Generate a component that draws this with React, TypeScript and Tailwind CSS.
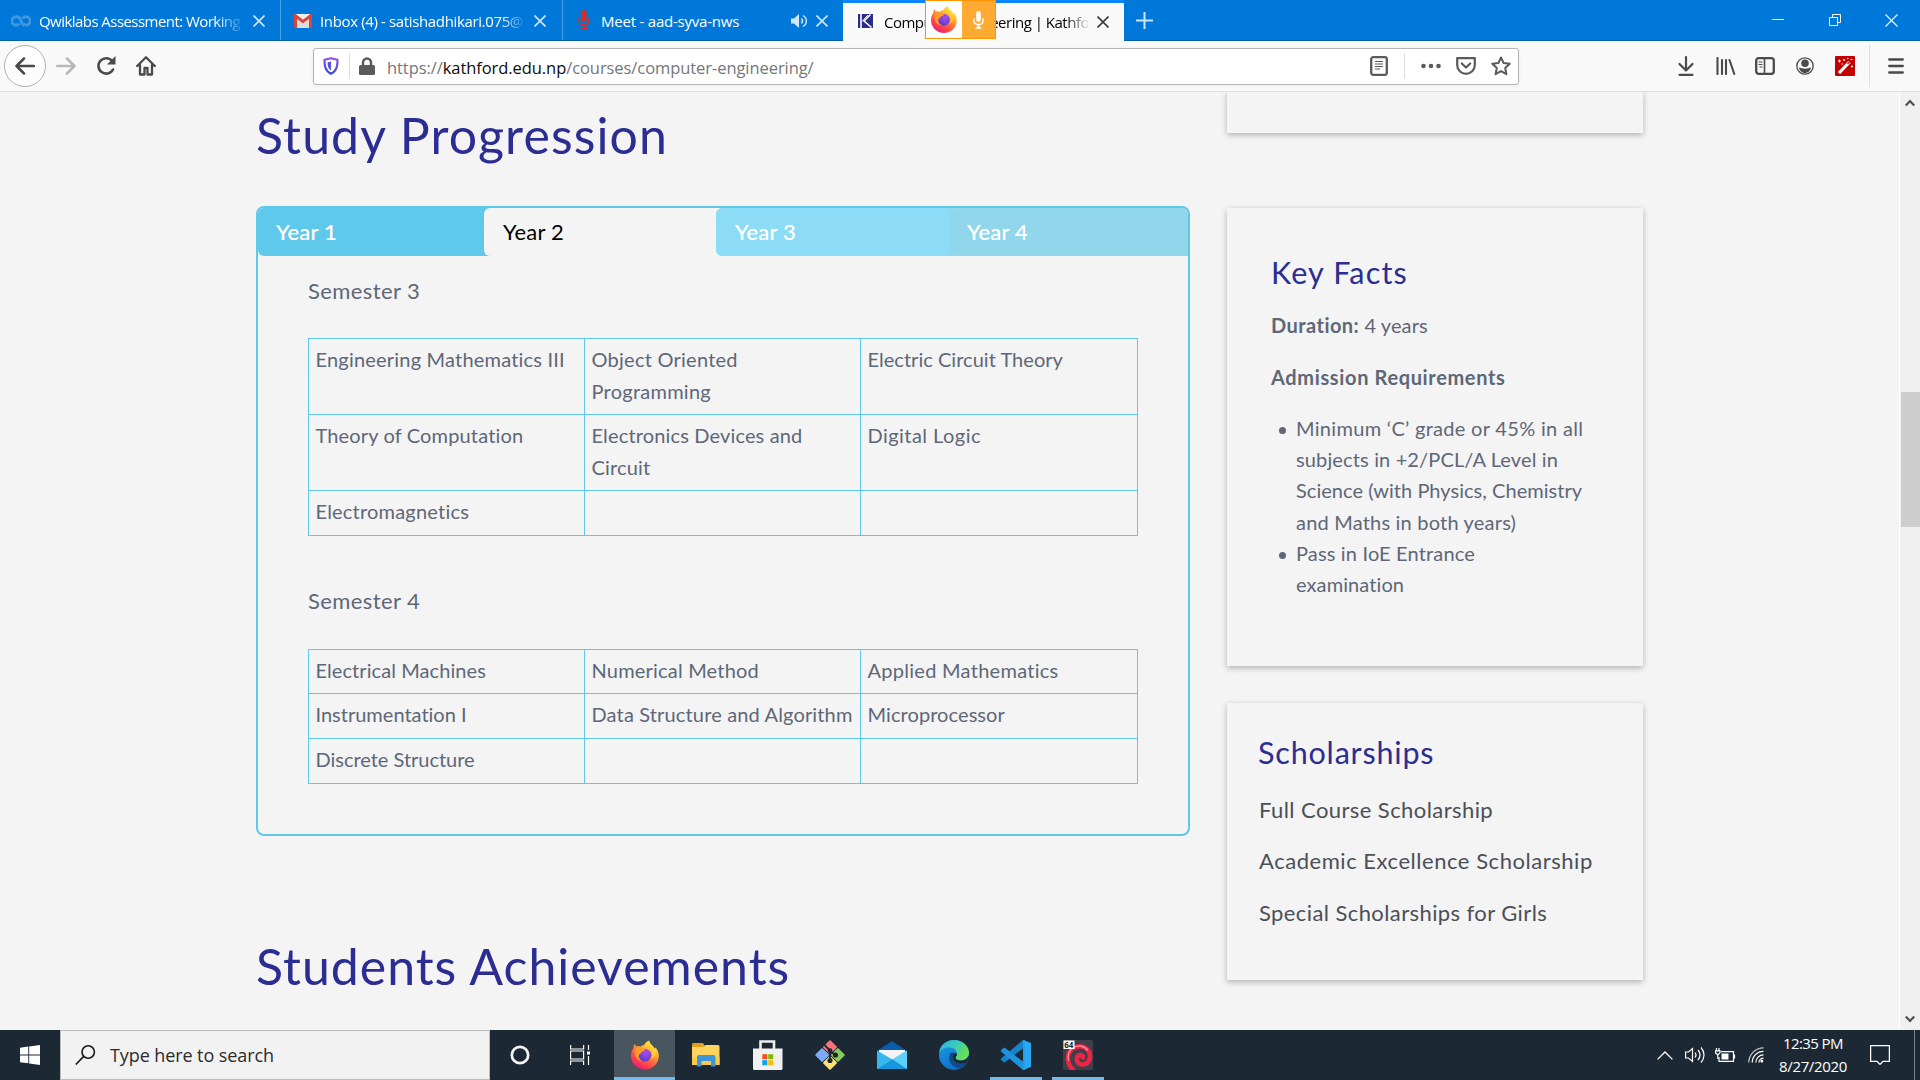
import type { ReactNode } from 'react';

const ui = "font-['Open_Sans','Noto_Sans',sans-serif]";

function Firefox({ className, id }: { className: string; id: string }) {
  return (
    <svg viewBox="0 0 28 29" className={className}>
      <defs>
        <linearGradient id={id + 'a'} x1="0.85" y1="0" x2="0.25" y2="1">
          <stop offset="0" stopColor="#fff44f" />
          <stop offset="0.3" stopColor="#ffc02f" />
          <stop offset="0.55" stopColor="#ff7139" />
          <stop offset="0.8" stopColor="#ff3a52" />
          <stop offset="1" stopColor="#e31587" />
        </linearGradient>
        <radialGradient id={id + 'b'} cx="0.6" cy="0.3" r="0.8">
          <stop offset="0" stopColor="#a94df0" />
          <stop offset="0.6" stopColor="#7342d8" />
          <stop offset="1" stopColor="#4a3fc0" />
        </radialGradient>
      </defs>
      <path
        d="M18.2 0c.4 2 1.4 3.400 3 4.700 1.300 1.200 2 2.300 2.400 3.600.6-.3.9-1 .9-1.500 2.200 2.800 3.500 6 3.300 9.300C27.500 23.300 21.400 29 14 29 6.300 29 0 23 0 15.400 0 12.300.9 9.500 2.500 7.400 2.500 5.800 2.900 4.500 3.800 3.300c.3 1.200.7 2 1.500 2.600C7 5.300 8.300 5.500 9.300 6.200 10.300 5.200 11.500 4.600 13 4.400c1.300-1.900 2.900-3.600 5.200-4.400z"
        fill={`url(#${id}a)`}
      />
      <circle cx="14" cy="14.800" r="6.300" fill={`url(#${id}b)`} />
      <path d="M4 8c2.200-1 4.300-.8 6 .4 1.500-.2 3 .1 4 .7-.4 1.500-1.700 1.900-3.300 2.300-.4 1.100-1 1.700-2.200 2.100C7 16 8 19 11 20.600c-4.600-.2-8-4-7-12.600z" fill="#ff9a2e" />
      <path d="M17.500 3c-.5 3 3.500 5 4 9 .4 3-1 5.500-3 7 4-1 6.500-4 6.200-8C24.500 7 20 6.500 17.500 3z" fill="#ffd43a" opacity=".75" />
    </svg>
  );
}

const TabClose = ({ dark }: { dark?: boolean }) => (
  <svg viewBox="0 0 12 12" className={dark ? 'size-3 shrink-0 text-[#3c3c3c]' : 'size-3 shrink-0 text-[#cfe6fa]'} stroke="currentColor" strokeWidth="1.600">
    <path d="M.5.5l11 11M11.500.5l-11 11" />
  </svg>
);

const Mic = ({ className }: { className: string }) => (
  <svg viewBox="0 0 12 20" className={className} fill="currentColor">
    <rect x="3.500" y="0" width="5" height="12" rx="2.500" />
    <path d="M1 8v2.500C1 13 3 15 6 15s5-2 5-4.500V8" fill="none" stroke="currentColor" strokeWidth="1.500" />
    <path d="M5 15h2v3h2.200v1.700H2.800V18H5z" />
  </svg>
);

function TabBar() {
  return (
    <div className={`flex h-[41px] bg-[#0078d9] text-[15px] leading-[40px] text-white border-b border-[#0060ae] ${ui}`}>
      <div className="flex w-[281px] items-center border-r border-[#4ba0e4] pl-[11px] pr-[15px] pt-[2px]">
        <svg viewBox="0 0 20 12" className="mr-2 h-3 w-5 shrink-0" fill="none" stroke="#3f97e0" strokeWidth="3">
          <path d="M14.500 8.500C12.500 11 11 10 10 6 9 2 7 1.500 5 1.800a4.200 4.200 0 0 0 0 8.400c1.500 0 2.500-.6 3.200-1.600M11.600 3.400C12.500 2.300 13.500 1.800 15 1.800a4.200 4.200 0 0 1 0 8.400" />
        </svg>
        <span className="mr-2 w-[207px] whitespace-nowrap tracking-[-0.55px] [mask-image:linear-gradient(90deg,#000_85%,transparent)]">Qwiklabs Assessment: Working</span>
        <TabClose />
      </div>
      <div className="flex w-[282px] items-center border-r border-[#4ba0e4] pl-[13px] pr-[15px] pt-[2px]">
        <svg viewBox="0 0 18 14" className="mr-2 h-[14px] w-[18px] shrink-0">
          <path d="M1 0h16v14H1z" fill="#f1f1f1" />
          <path d="M3 14V5l6 5 6-5v9z" fill="#dcdcdc" />
          <path d="M0 1.200V13a1 1 0 0 0 1 1h2V4.800l6 4.600 6-4.600V14h2a1 1 0 0 0 1-1V1.200C18 .2 16.800-.4 16 .3L9 5.800 2 .3C1.200-.4 0 .2 0 1.200z" fill="#dc4437" />
        </svg>
        <span className="mr-2 w-[206px] whitespace-nowrap tracking-[-0.36px] [mask-image:linear-gradient(90deg,#000_88%,transparent)]">Inbox (4) - satishadhikari.075@</span>
        <TabClose />
      </div>
      <div className="flex w-[280px] items-center pl-[15px] pr-[15px] pt-[2px]">
        <Mic className="mr-[11px] mt-[-2px] h-[20px] w-[12px] shrink-0 text-[#e0291d]" />
        <span className="mr-auto tracking-[-0.22px]">Meet - aad-syva-nws</span>
        <svg viewBox="0 0 18 14" className="mr-[7px] h-[14px] w-[18px]" fill="none" stroke="#cfe6fa" strokeWidth="1.400">
          <path d="M0 4.500h3L8 0v14L3 9.500H0z" fill="#cfe6fa" stroke="none" />
          <path d="M10.500 4.500c1.300 1.500 1.300 3.500 0 5M12 1.500c4.500 2.500 4.500 8.500 0 11" />
        </svg>
        <TabClose />
      </div>
      <div className="relative -mb-px flex w-[281px] items-center border-t-[3px] border-[#0a84ff] bg-[#f9f9f9] pb-[1px] pl-[13px] pr-[15px] text-black">
        <svg viewBox="0 0 19 19" className="mr-[9px] size-[19px] shrink-0">
          <path d="M0 0h19v19H0z" fill="#fff" />
          <path d="M2 2h15v14H2z" fill="#2b2d8e" />
          <path d="M5 2v14M14.500 2.500L8 9l7.500 6.500" stroke="#fff" strokeWidth="1.600" fill="none" />
          <path d="M12 3L6 9.500" stroke="#fff" strokeWidth="1" />
        </svg>
        <span className="mr-auto w-[206px] whitespace-nowrap tracking-[-0.5px] [mask-image:linear-gradient(90deg,#000_88%,transparent)]">Computer Engineering | Kathfo</span>
        <TabClose dark />
        <div className="absolute -top-[3px] left-[82px] flex h-[39px] w-[71px] border border-[#ff9500] bg-white">
          <div className="flex w-[36px] items-center justify-center">
            <Firefox id="share" className="h-[27px] w-[26px]" />
          </div>
          <div className="flex flex-1 items-center justify-center bg-[#ffaa33]">
            <Mic className="h-[18px] w-[11px] text-white" />
          </div>
        </div>
      </div>
      <div className="flex flex-1 items-center pl-[12px] pr-[22px]">
        <svg viewBox="0 0 17 17" className="mr-auto size-[17px]" stroke="#cfe6fa" strokeWidth="2">
          <path d="M8.500 0v17M0 8.500h17" />
        </svg>
        <svg viewBox="0 0 12 12" className="mr-[45px] size-3" stroke="#fff">
          <path d="M0 5.500h12" />
        </svg>
        <svg viewBox="0 0 12 12" className="mr-[44px] size-3" stroke="#fff" fill="none">
          <path d="M.5 3.500h8v8h-8zM3.500 3.500v-3h8v8h-3" />
        </svg>
        <svg viewBox="0 0 13 13" className="size-[13px]" stroke="#fff" strokeWidth="1.100">
          <path d="M.5.5l12 12M12.500.5l-12 12" />
        </svg>
      </div>
    </div>
  );
}

function NavBar() {
  return (
    <div className="flex h-[51px] items-center border-b border-[#dedede] bg-[#f9f9f9] pl-1 pr-[16px]">
      <div className="flex size-[42px] items-center justify-center rounded-full border border-[#b1b1b1] bg-[#fdfdfd]">
        <svg viewBox="0 0 20 18" className="h-[18px] w-5" fill="none" stroke="#4a4a4b" strokeWidth="2.500" strokeLinecap="round" strokeLinejoin="round">
          <path d="M9 1.500L1.500 9 9 16.500M2 9h17" />
        </svg>
      </div>
      <svg viewBox="0 0 20 18" className="ml-[10px] h-[18px] w-5" fill="none" stroke="#b8b8b9" strokeWidth="2.500" strokeLinecap="round" strokeLinejoin="round">
        <path d="M11 1.500L18.500 9 11 16.500M18 9H1" />
      </svg>
      <svg viewBox="0 0 20 20" className="ml-[20px] size-5" fill="none" stroke="#4a4a4b" strokeWidth="2.600" strokeLinecap="round">
        <path d="M16.500 5.500A7.700 7.700 0 1 0 17 13.500" />
        <path d="M19.500 0v8.500H11z" fill="#4a4a4b" stroke="none" />
      </svg>
      <svg viewBox="0 0 20 20" className="ml-[20px] size-5" fill="none" stroke="#4a4a4b" strokeWidth="2.300" strokeLinecap="round" strokeLinejoin="round">
        <path d="M1.200 10L10 1.300l8.800 8.700M4 9v9.500h4.500V12h3v6.500H16V9" />
      </svg>
      <div className="ml-[157px] flex h-[37px] w-[1206px] items-center rounded-[3px] border border-[#b5b5b6] bg-white pl-[9px] pr-[7px] shadow-[0_1px_4px_rgba(0,0,0,0.06)]">
        <svg viewBox="0 0 16 18" className="h-[18px] w-4" fill="none">
          <defs>
            <linearGradient id="shield" x1="0" y1="0" x2="0" y2="1">
              <stop offset="0" stopColor="#8a4ff0" />
              <stop offset="1" stopColor="#3350d0" />
            </linearGradient>
          </defs>
          <path d="M8 1.200l6.500 1.500c0 6-.5 11-6.500 14C2 13.700 1.500 8.700 1.500 2.700z" stroke="url(#shield)" strokeWidth="2.200" strokeLinejoin="round" />
          <path d="M8 4.500v9C5.500 12 4.500 9.500 4.600 5.200z" fill="#5a50e0" />
        </svg>
        <span className="ml-[10px] h-[26px] w-px bg-[#dedede]" />
        <svg viewBox="0 0 16 18" className="ml-[9px] h-[18px] w-4" fill="#5b5b5c">
          <rect x="0" y="8" width="16" height="10" rx="1.500" />
          <path d="M4 9V5.500a4 4 0 0 1 8 0V9" fill="none" stroke="#5b5b5c" strokeWidth="2.500" />
        </svg>
        <span className={`ml-[12px] mr-auto pt-[4px] text-[16.5px] tracking-[-0.07px] text-[#75767a] ${ui}`}>
          https://<span className="text-[#0c0c0d]">kathford.edu.np</span>/courses/computer-engineering/
        </span>
        <svg viewBox="0 0 18 20" className="h-5 w-[18px]" fill="none" stroke="#5b5b5c">
          <rect x="1.200" y="1.200" width="15.600" height="17.600" rx="2" strokeWidth="2.300" />
          <path d="M5 5.500h8M5 8h8M5 10.500h8M5 13h5" strokeWidth="1.200" />
        </svg>
        <span className="ml-[16px] h-[26px] w-px bg-[#dedede]" />
        <svg viewBox="0 0 20 6" className="ml-[16px] h-[6px] w-5" fill="#5b5b5c">
          <circle cx="2.500" cy="3" r="2.300" />
          <circle cx="10" cy="3" r="2.300" />
          <circle cx="17.500" cy="3" r="2.300" />
        </svg>
        <svg viewBox="0 0 20 18" className="ml-[15px] h-[18px] w-5" fill="none" stroke="#5b5b5c" strokeWidth="2.200" strokeLinecap="round" strokeLinejoin="round">
          <path d="M1.200 1.200h17.600V8c0 5-4 8.800-8.800 8.800S1.200 13 1.200 8z" />
          <path d="M5.800 6.500L10 10.500l4.200-4" />
        </svg>
        <svg viewBox="0 0 20 20" className="ml-[15px] size-5" fill="none" stroke="#5b5b5c" strokeWidth="2" strokeLinejoin="round">
          <path d="M10 1.500l2.600 5.600 6.100.7-4.500 4.200 1.200 6.200-5.400-3.100-5.400 3.100 1.200-6.200-4.500-4.200 6.100-.7z" />
        </svg>
      </div>
      <div className="ml-auto flex items-center">
        <svg viewBox="0 0 18 20" className="h-5 w-[18px]" fill="none" stroke="#4a4a4b" strokeWidth="2.200" strokeLinecap="round" strokeLinejoin="round">
          <path d="M9 1.200v12.500M2.500 8L9 14.500 15.500 8M2.500 18.800h13" />
        </svg>
        <svg viewBox="0 0 20 18" className="ml-[21px] h-[18px] w-5" stroke="#4a4a4b" strokeWidth="2.100" strokeLinecap="round">
          <path d="M1.500 1v16M6 3v14M10 3v14M13.500 3l4.800 14" />
        </svg>
        <svg viewBox="0 0 20 18" className="ml-[19px] h-[18px] w-5" fill="none" stroke="#4a4a4b">
          <rect x="1.200" y="1.200" width="17.600" height="15.600" rx="2.500" strokeWidth="2.300" />
          <path d="M9.500 1v16" strokeWidth="1.600" />
          <path d="M3.500 5h4M3.500 7.500h4M4.500 10h3" strokeWidth="1.200" />
        </svg>
        <svg viewBox="0 0 18 18" className="ml-[21px] size-[18px]" fill="#4a4a4b">
          <circle cx="9" cy="9" r="8.200" fill="none" stroke="#4a4a4b" strokeWidth="1.300" />
          <circle cx="9" cy="6.300" r="3.800" />
          <path d="M3 10.500c1.500.2 3.500 1.200 6 1.200s4.500-1 6-1.200c-.5 3-3 5.500-6 5.500s-5.500-2.500-6-5.500z" />
        </svg>
        <svg viewBox="0 0 20 20" className="ml-[21px] size-5">
          <rect width="20" height="20" rx="1" fill="#c40000" />
          <path d="M4 17L14.500 6" stroke="#fff" strokeWidth="3.200" />
          <path d="M12.500 8l2-2" stroke="#c40000" strokeWidth="1.300" />
          <path d="M3 5h3M4.500 3.500v3M8 4h2M9 3v2M16 10.500h2M17 9.500v2M12 2.500h1.500M15.500 3.500h2M6.500 8h1.500" stroke="#fff" strokeWidth="1" />
        </svg>
        <span className="ml-[14px] h-[42px] w-px bg-[#dedede]" />
        <svg viewBox="0 0 16 16" className="ml-[18px] size-4" stroke="#4a4a4b" strokeWidth="2.300" strokeLinecap="round">
          <path d="M1.200 1.500h13.600M1.200 8h13.600M1.200 14.500h13.600" />
        </svg>
      </div>
    </div>
  );
}

type Cell = [string, string];

function CourseTable({ rows, sizes }: { rows: Cell[][]; sizes: string[] }) {
  return (
    <div className="w-[830px] border-l border-t border-[#5fc9ec]">
      {rows.map((row, r) => (
        <div key={r} className={`grid grid-cols-[276px_276px_277px] ${sizes[r]}`}>
          {row.map(([text, tracking], i) => (
            <div key={i} className={`whitespace-pre border-b border-r border-[#5fc9ec] pl-[6.5px] pt-1 text-[20px] leading-8 ${tracking}`}>
              {text}
            </div>
          ))}
        </div>
      ))}
    </div>
  );
}

const Card = ({ className, children }: { className: string; children?: ReactNode }) => (
  <div className={`w-[416px] bg-[#f4f4f4] shadow-[0_2px_6px_rgba(0,0,0,0.28)] ${className}`}>{children}</div>
);

const facts: [string, string][][] = [
  [
    ['Minimum ‘C’ grade or 45% in all', 'tracking-[0.31px]'],
    ['subjects in +2/PCL/A Level in', 'tracking-[0.14px]'],
    ['Science (with Physics, Chemistry', 'tracking-[0.04px]'],
    ['and Maths in both years)', 'tracking-[0.2px]'],
  ],
  [
    ['Pass in IoE Entrance', 'tracking-[0.16px]'],
    ['examination', 'tracking-[0.1px]'],
  ],
];

function Page() {
  return (
    <div className="flex h-[938px] overflow-hidden bg-[#f4f4f4] font-['Lato','Open_Sans',sans-serif] text-[#5d6777]">
      <main className="ml-[256px] w-[934px] pt-[13px]">
        <h1 className="h-[60px] text-[50px] leading-[60px] tracking-[1.1px] text-[#2b2d92]">Study Progression</h1>
        <div className="mt-[41px] h-[630px] rounded-lg border-2 border-[#5fc9ec]">
          <div className="flex h-12 text-[22px] leading-[47px] tracking-[0.2px] text-white">
            <div className="w-[232px] rounded-l-md bg-[#5fc9ec] pl-[18px] [text-shadow:0_0_0.5px_#fff]">Year 1</div>
            <div className="-ml-[6px] w-[238px] rounded-l-md bg-[#f4f4f4] pl-[19px] text-black">Year 2</div>
            <div className="-ml-[6px] w-[238px] rounded-l-md bg-[#8cdcf7] pl-[19px] [text-shadow:0_0_0.5px_#fff]">Year 3</div>
            <div className="-ml-[4px] flex-1 rounded-l-md rounded-tr-md bg-[#92d6eb] pl-[17px] [text-shadow:0_0_0.5px_#fff]">Year 4</div>
          </div>
          <div className="pl-[50px] pt-[18px]">
            <h2 className="mb-[31px] h-[33px] text-[22px] leading-[33px] tracking-[0.4px]">Semester 3</h2>
            <CourseTable
              sizes={['h-[76px]', 'h-[76px]', 'h-[45px]']}
              rows={[
                [
                  ['Engineering Mathematics III', 'tracking-[0.2px]'],
                  ['Object Oriented\nProgramming', 'tracking-[0.25px]'],
                  ['Electric Circuit Theory', 'tracking-[0.03px]'],
                ],
                [
                  ['Theory of Computation', 'tracking-[0.15px]'],
                  ['Electronics Devices and\nCircuit', 'tracking-[0.15px]'],
                  ['Digital Logic', 'tracking-[0.45px]'],
                ],
                [['Electromagnetics', 'tracking-[0.2px]'], ['', ''], ['', '']],
              ]}
            />
            <h2 className="mb-[32px] mt-[48px] h-[33px] text-[22px] leading-[33px] tracking-[0.4px]">Semester 4</h2>
            <CourseTable
              sizes={['h-[44px]', 'h-[45px]', 'h-[45px]']}
              rows={[
                [
                  ['Electrical Machines', 'tracking-[0.08px]'],
                  ['Numerical Method', 'tracking-[0.2px]'],
                  ['Applied Mathematics', 'tracking-[0.28px]'],
                ],
                [
                  ['Instrumentation I', 'tracking-[0px] [font-variant-ligatures:none]'],
                  ['Data Structure and Algorithm', 'tracking-[0.15px]'],
                  ['Microprocessor', 'tracking-[0.08px]'],
                ],
                [['Discrete Structure', 'tracking-[-0.02px]'], ['', ''], ['', '']],
              ]}
            />
          </div>
        </div>
        <h1 className="mt-[100px] h-[60px] text-[50px] leading-[60px] tracking-[0.99px] text-[#2b2d92]">Students Achievements</h1>
      </main>
      <aside className="ml-[37px] w-[416px]">
        <Card className="h-[41px]" />
        <Card className="mt-[75px] h-[458px] pl-[44px] pt-[43px] text-[20px] leading-8">
          <h3 className="pt-px text-[30.5px] leading-10 tracking-[1.15px] text-[#2b2d92]">Key Facts</h3>
          <p className="mt-[17px] tracking-[0.1px]">
            <b className="tracking-[0.45px]">Duration:</b> 4 years
          </p>
          <p className="mt-5 font-bold tracking-[0.64px]">Admission Requirements</p>
          <ul className="mt-5 leading-[31.2px]">
            {facts.map((lines, i) => (
              <li key={i} className="flex">
                <span className="ml-[8px] mr-[10px] mt-[14px] size-[7px] shrink-0 rounded-full bg-[#5d6777]" />
                <div>
                  {lines.map(([t, tr]) => (
                    <div key={t} className={`whitespace-nowrap ${tr}`}>{t}</div>
                  ))}
                </div>
              </li>
            ))}
          </ul>
        </Card>
        <Card className="mt-[37px] h-[277px] pl-[31px] pt-[28px] text-[22px] leading-8 text-[#4b4f58]">
          <h3 className="pt-px text-[30.5px] leading-10 tracking-[0.82px] text-[#2b2d92]">Scholarships</h3>
          <p className="mt-[22px] pl-px tracking-[0.42px]">Full Course Scholarship</p>
          <p className="mt-[19px] pl-px tracking-[0.54px]">Academic Excellence Scholarship</p>
          <p className="mt-5 pl-px tracking-[0.41px]">Special Scholarships for Girls</p>
        </Card>
      </aside>
      <div className="ml-auto flex w-[21px] flex-col items-center border-l border-white bg-[#f0f0f0]">
        <svg viewBox="0 0 10 8" className="mt-[7px] h-2 w-[10px]" fill="none" stroke="#505050" strokeWidth="2.200">
          <path d="M.8 6.500L5 2l4.200 4.500" />
        </svg>
        <div className="mt-[285px] h-[135px] w-[19px] bg-[#cdcdcd]" />
        <svg viewBox="0 0 10 8" className="mb-[7px] mt-auto h-2 w-[10px]" fill="none" stroke="#505050" strokeWidth="2.200">
          <path d="M.8 1.500L5 6l4.200-4.500" />
        </svg>
      </div>
    </div>
  );
}

const Explorer = () => (
  <svg viewBox="0 0 28 24" className="h-6 w-7">
    <path d="M0 1.500A1.500 1.500 0 0 1 1.500 0H11l2 3v4H0z" fill="#e0a01e" />
    <path d="M0 4h11.500l2-2H26a1.500 1.500 0 0 1 1.500 1.500V22H0z" fill="#ffd45e" />
    <path d="M0 14h27.500v8H0z" fill="#fbc94c" />
    <path d="M5 23.500V14a2 2 0 0 1 2-2h14.500a2 2 0 0 1 2 2v9.500H19V18h-9.500v5.500z" fill="#3c96d8" />
  </svg>
);

const Store = () => (
  <svg viewBox="0 0 30 30" className="size-[30px]">
    <path d="M7.500 9V1.500h13.500V9" fill="none" stroke="#efefef" strokeWidth="2.600" />
    <path d="M0 8.500h29.500V28.500A1.500 1.500 0 0 1 28 30H1.500A1.500 1.500 0 0 1 0 28.500z" fill="#f0f0f0" />
    <path d="M9.300 14.200h5v5h-5z" fill="#f25022" />
    <path d="M15.200 14.200h5v5h-5z" fill="#7fba00" />
    <path d="M9.300 20.200h5v5h-5z" fill="#00a4ef" />
    <path d="M15.200 20.200h5v5h-5z" fill="#ffb900" />
  </svg>
);

const Git = () => (
  <svg viewBox="0 0 30 30" className="size-[30px]">
    <g transform="rotate(45 15 15)">
      <rect x="4.500" y="4.500" width="10" height="10" rx="1.500" fill="#f5747a" />
      <rect x="15.500" y="4.500" width="10" height="10" rx="1.500" fill="#8acb5c" />
      <rect x="4.500" y="15.500" width="10" height="10" rx="1.500" fill="#7aaaf8" />
      <rect x="15.500" y="15.500" width="10" height="10" rx="1.500" fill="#fde078" />
    </g>
    <g transform="translate(15 15) rotate(45)">
      <path d="M-10.600 -10.600h10v10h-10z" fill="#f5747a" />
      <path d="M.6 -10.600h10v10H.6z" fill="#8acb5c" />
      <path d="M-10.600 .6h10v10h-10z" fill="#7aaaf8" />
      <path d="M.6 .6h10v10H.6z" fill="#fde078" />
    </g>
    <path d="M9.500 5l5.500 5.500v10M15 10.500l5 4.500" stroke="#20262c" strokeWidth="1.800" fill="none" />
    <g fill="#20262c">
      <circle cx="15" cy="10.500" r="2.300" />
      <circle cx="20.500" cy="15" r="2.600" />
      <circle cx="15" cy="20.500" r="2.600" />
    </g>
  </svg>
);

const MailIcon = () => (
  <svg viewBox="0 0 30 28" className="h-7 w-[30px]">
    <path d="M0 10L15 0l15 10z" fill="#0a5bab" />
    <path d="M2 9h26v12H2z" fill="#f3f3f3" />
    <path d="M0 9.500l15.500 9L30 9.500V28H0z" fill="#35b8ee" />
    <path d="M15.500 18.500L30 28V9.500z" fill="#5fd0f8" />
    <path d="M0 28l15.500-9.500L30 28z" fill="#1a96dc" />
  </svg>
);

const Edge = () => (
  <svg viewBox="0 0 30 30" className="size-[30px]">
    <defs>
      <linearGradient id="edgeTop" x1="0" y1="0" x2="1" y2=".5">
        <stop offset="0" stopColor="#2cb0e8" />
        <stop offset=".5" stopColor="#36c8c0" />
        <stop offset="1" stopColor="#6ae052" />
      </linearGradient>
      <linearGradient id="edgeLow" x1="0" y1="0" x2=".6" y2="1">
        <stop offset="0" stopColor="#1b9de2" />
        <stop offset="1" stopColor="#0f6cc4" />
      </linearGradient>
    </defs>
    <circle cx="15" cy="15" r="15" fill="url(#edgeLow)" />
    <path d="M0 13C1 5 7.500 0 15 0c8.500 0 15 6 15 12.500 0 5-3.500 8-8 8-3.500 0-5.500-1.500-5.500-2.800 0-1 1.500-1.500 1.500-4C18 9.500 14 7.500 10 7.500 5.500 7.500 1.500 9.500 0 13z" fill="url(#edgeTop)" />
    <path d="M11 14c-3 7 2.500 14 10 14.500 3-1.200 5-3.300 6.500-5.800-7 3-12.500.3-13.800-4.700-.5-2 .3-3.500 1.300-5-1.500-.8-3-.5-4 1z" fill="#114a8b" />
    <path d="M16.500 17.700c0 1.300 2 2.800 5.500 2.800 3.300 0 6.200-1.700 7.400-4.500L30 18l-2.500 4.700c-7 2.500-12.500.3-13.800-4.700-.5-2 .3-3.500 1.800-5 1.500-.5 2.500 1 2.500 1.500 0 1.700-1.500 2.200-1.500 3.200z" fill="#1c2935" />
  </svg>
);

const Code = () => (
  <svg viewBox="0 0 30 30" className="size-[30px]">
    <path d="M22 0l8 3v24l-8 3z" fill="#2aa8f2" />
    <path d="M22 0v8.500L3.500 22.500 0 20v-1.500z" fill="#1583cc" />
    <path d="M22 30v-8.500L3.500 7.500 0 10v1.500z" fill="#1b93df" />
    <path d="M22 0v30l2 0V0z" fill="#239fec" />
  </svg>
);

const Swirl = () => (
  <svg viewBox="0 0 30 30" className="size-[30px]">
    <rect width="30" height="30" rx="1.500" fill="#3d4049" />
    <path d="M10 30C4 24 3.500 15 8 10c5-5.500 14-4.500 17.500 1 3.500 6 .5 13.500-6 13.500-4.500 0-7-4.500-5-8 1.500-2.500 5.500-2 5.500 1" fill="none" stroke="#ee2444" strokeWidth="4.600" strokeLinecap="round" />
    <path d="M5.500 20C4.500 15 6 11 9 8.500c5-4 12-3 15.500 1.500" fill="none" stroke="#ff8a98" strokeWidth="1.400" strokeLinecap="round" />
    <rect x=".5" y=".5" width="11" height="8.500" fill="#fff" />
    <text x="1.200" y="8" fontSize="8" fontWeight="700" fontFamily="Open Sans" fill="#222">64</text>
  </svg>
);

const TaskButton = ({ children, w, active, bar }: { children: ReactNode; w: string; active?: boolean; bar?: boolean }) => (
  <div className={`relative flex h-[50px] items-center justify-center ${w} ${active ? 'bg-[#4a565f]' : ''}`}>
    {children}
    {(active || bar) && <div className={`absolute bottom-0 h-[3px] bg-[#76b9ed] ${active ? 'inset-x-0' : 'inset-x-[5px]'}`} />}
  </div>
);

function Taskbar() {
  return (
    <div className={`flex h-[50px] items-center bg-[#1c2935] ${ui}`}>
      <div className="flex w-[60px] justify-center">
        <svg viewBox="0 0 20 20" className="size-5" fill="#fff">
          <path d="M0 2.800l8.300-1.200v7.900H0zM9.200 1.500L20 0v9.500H9.200zM0 10.400h8.300v7.900L0 17.200zM9.200 10.400H20V20L9.200 18.400z" />
        </svg>
      </div>
      <div className="flex h-[50px] w-[430px] items-center border border-[#bdbdbd] bg-[#f2f2f2] pl-[14px]">
        <svg viewBox="0 0 21 20" className="h-5 w-[21px]" fill="none" stroke="#1a1a1a" strokeWidth="1.600">
          <circle cx="13.200" cy="7" r="6.200" />
          <path d="M8.700 11.400L.8 19.500" />
        </svg>
        <span className="ml-[14px] pt-px text-[18px] tracking-[-0.09px] text-[#2b2b2b]">Type here to search</span>
      </div>
      <div className="flex w-[60px] justify-center">
        <svg viewBox="0 0 20 20" className="size-5" fill="none" stroke="#f4f4f4" strokeWidth="2.700">
          <circle cx="10" cy="10" r="8.200" />
        </svg>
      </div>
      <div className="flex w-[64px] justify-center pr-[3px]">
        <svg viewBox="0 0 21 20" className="h-5 w-[21px]" fill="none" stroke="#fff" strokeWidth="1.200">
          <path d="M.6 0v4h13V0M.6 20v-4h13v4M.6 6h13v8H.6zM18.500 0v5M18.500 11v9" />
          <path d="M17 6.500h3v3h-3z" fill="#fff" stroke="none" />
        </svg>
      </div>
      <TaskButton w="w-[61px]" active><Firefox id="task" className="-mt-[1px] h-[30px] w-[28px]" /></TaskButton>
      <TaskButton w="w-[62px]"><Explorer /></TaskButton>
      <TaskButton w="w-[62px]"><Store /></TaskButton>
      <TaskButton w="w-[62px]"><Git /></TaskButton>
      <TaskButton w="w-[62px]"><MailIcon /></TaskButton>
      <TaskButton w="w-[62px]"><Edge /></TaskButton>
      <TaskButton w="w-[62px]" bar><Code /></TaskButton>
      <TaskButton w="w-[62px]" bar><Swirl /></TaskButton>
      <div className="ml-auto flex items-center text-white">
        <svg viewBox="0 0 16 9" className="h-[9px] w-4" fill="none" stroke="#fff" strokeWidth="1.300">
          <path d="M.6 8.400L8 1l7.400 7.400" />
        </svg>
        <svg viewBox="0 0 21 18" className="ml-3 h-[18px] w-[21px]" fill="none" stroke="#fff" strokeWidth="1.200">
          <path d="M.6 6h3L7.500 2.500v13L3.600 12h-3z" />
          <path d="M10 6.500c1.200 1.500 1.200 3.500 0 5M13 4c2.500 3 2.500 7 0 10M16 1.500c4 4.500 4 10.500 0 15" />
        </svg>
        <svg viewBox="0 0 21 15" className="ml-[9px] h-[15px] w-[21px]" fill="none" stroke="#fff" strokeWidth="1.200">
          <path d="M6 3.600h12.500v9.800H4V9M19.500 6.500v4" />
          <path d="M6.500 5.500h7v6h-7z" fill="#fff" stroke="none" />
          <path d="M1.500 0v2.500M4 0v2.500M.5 2.800H5v2L2.800 7 .5 4.800zM2.800 7v4" />
        </svg>
        <svg viewBox="0 0 16 16" className="ml-[12px] size-4" fill="none" stroke="#fff" strokeWidth="1.200">
          <path d="M.8 15.500C.8 7.500 7.500.8 15.500.8" opacity=".75" />
          <path d="M4.200 15.500c0-6.200 5-11.200 11.300-11.200M7.800 15.500c0-4.200 3.400-7.600 7.700-7.600M11 15.500c0-2.500 2-4.300 4.500-4.300" />
          <circle cx="13.800" cy="14" r="1.500" fill="#fff" stroke="none" />
        </svg>
        <div className="ml-[13px] flex w-[72px] flex-col items-center whitespace-nowrap text-[15px] leading-[23px]">
          <span className="tracking-[-0.6px]">12:35 PM</span>
          <span className="tracking-[-0.34px]">8/27/2020</span>
        </div>
        <svg viewBox="0 0 20 20" className="ml-[21px] size-5" fill="none" stroke="#fff" strokeWidth="1.300">
          <path d="M.6.6h18.800v15.800h-6.400L10 19.400l-3-3H.6z" />
        </svg>
        <span className="ml-[24px] mr-[5px] h-[50px] w-px bg-[#7a838b]" />
      </div>
    </div>
  );
}

export default function App() {
  return (
    <div className="flex h-[1080px] w-[1920px] flex-col overflow-hidden">
      <TabBar />
      <NavBar />
      <Page />
      <Taskbar />
    </div>
  );
}
